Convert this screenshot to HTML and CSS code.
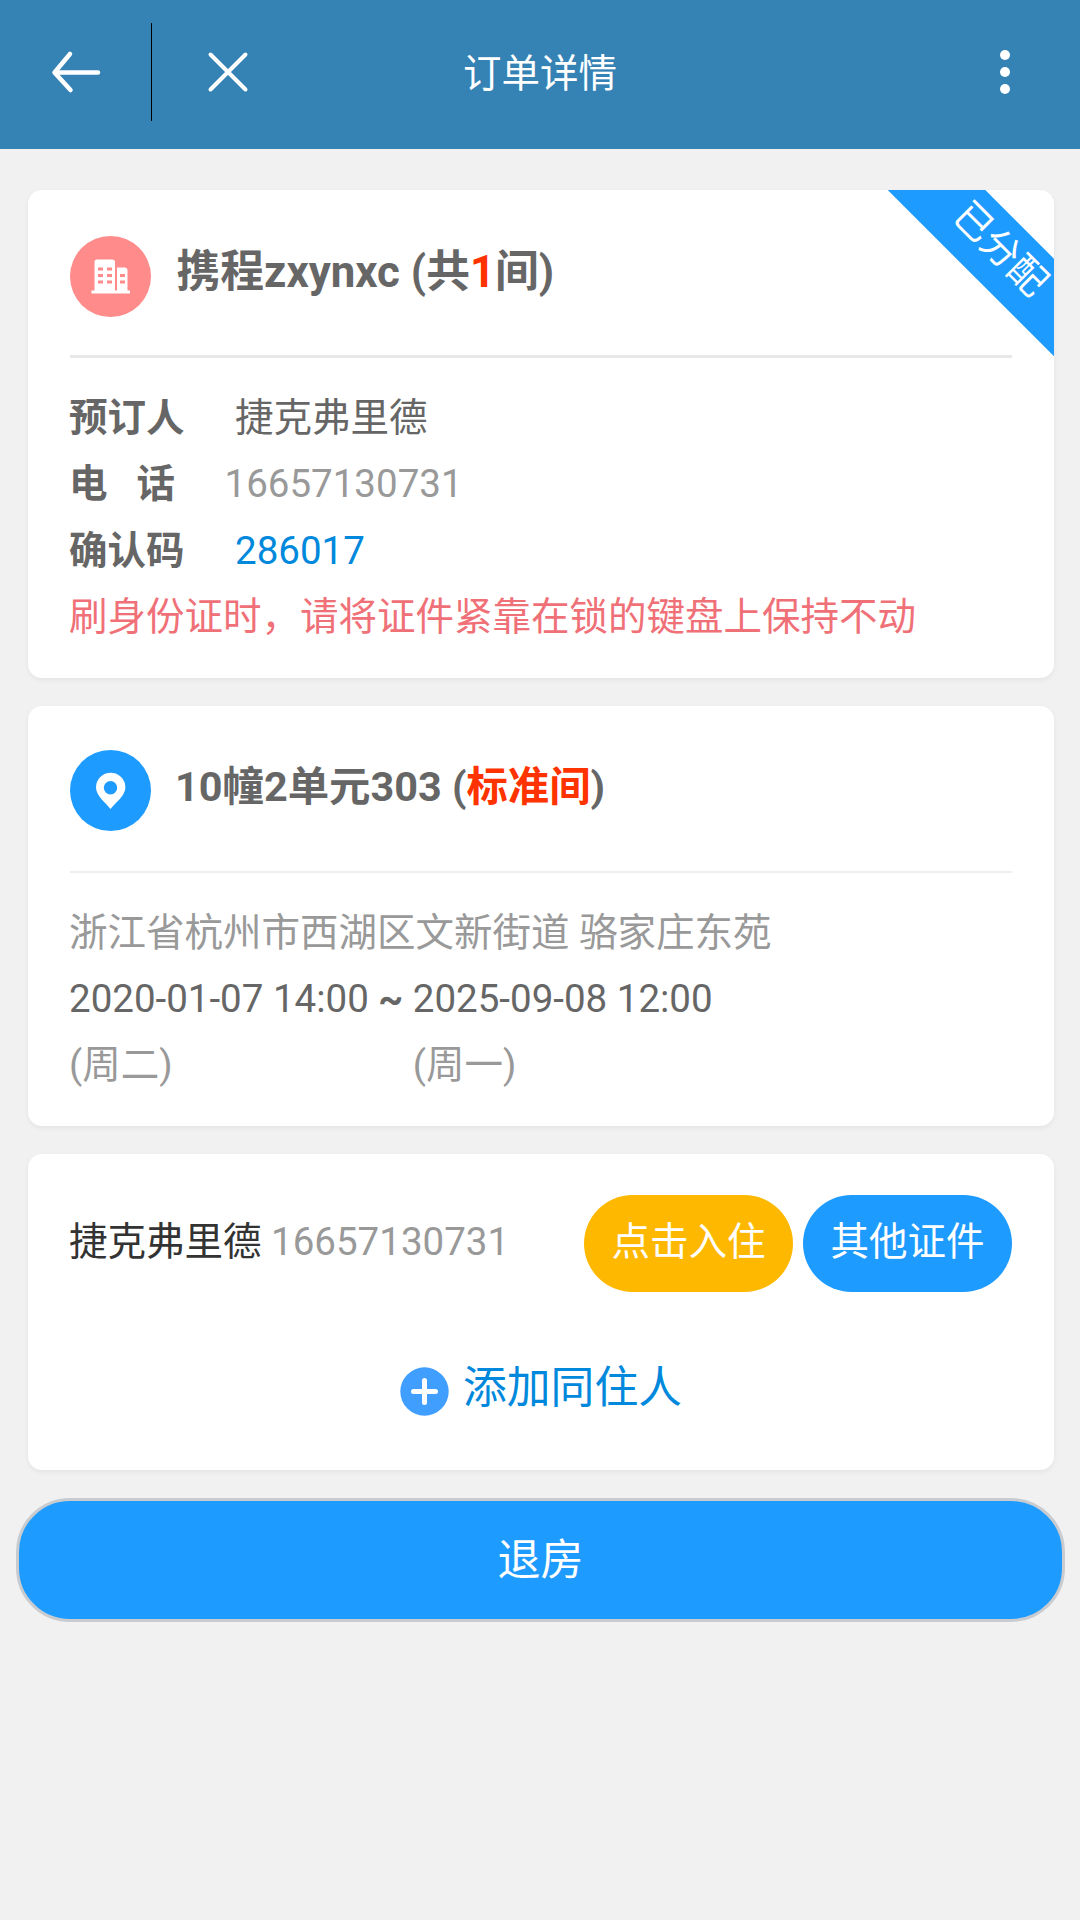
FILE: index.html
```html
<!DOCTYPE html>
<html lang="zh-CN">
<head>
<meta charset="utf-8">
<title>订单详情</title>
<link rel="stylesheet" href="styles.css">
</head>
<body>
<header class="topbar">
  <div class="topbar-side">
    <svg class="icon-back" width="52" height="44" viewBox="0 0 52 44"><path d="M20 4 4.500 22.500 20.500 40M5 22.500H48"/></svg>
    <span class="topbar-line"></span>
    <svg class="icon-close" width="42" height="42" viewBox="0 0 42 42"><path d="M3.500 3.500 38.500 38.500M38.500 3.500 3.500 38.500"/></svg>
  </div>
  <h1 class="topbar-title">订单详情</h1>
  <div class="topbar-side topbar-end">
    <svg class="icon-more" width="10" height="44" viewBox="0 0 10 44"><circle cx="5" cy="5" r="5"/><circle cx="5" cy="22" r="5"/><circle cx="5" cy="39" r="5"/></svg>
  </div>
</header>
<main class="content">
  <section class="card card-order">
    <div class="ribbon">已分配</div>
    <div class="card-head">
      <svg class="badge" width="81" height="81" viewBox="0 0 81 81">
        <circle cx="40.500" cy="40.500" r="40.500" fill="#ff8b8b"/>
        <path fill="#fff" fill-rule="evenodd" d="M21.500 54.500H24.500V26Q24.500 23.500 27 23.500H42.500Q45 23.500 45 26V54.500H47V31.500H54.500Q57.500 31.500 57.500 34.500V54.500H60V57.500H21.500ZM28 31.500V34.500H33V31.500ZM37 31.500V34.500H42V31.500ZM28 38V41H33V38ZM37 38V41H42V38ZM28 44.500V47.500H33V44.500ZM37 44.500V47.500H42V44.500ZM50 38V41H55V38ZM50 44.500V47.500H55V44.500Z"/>
      </svg>
      <h2 class="card-title">携程zxynxc (共<em>1</em>间)</h2>
    </div>
    <div class="rows">
      <div class="row"><b class="label">预订人</b><span>捷克弗里德</span></div>
      <div class="row"><b class="label label-phone"><i>电</i><i>话</i></b><span class="muted">16657130731</span></div>
      <div class="row"><b class="label">确认码</b><span class="link">286017</span></div>
      <div class="row warn">刷身份证时，请将证件紧靠在锁的键盘上保持不动</div>
    </div>
  </section>

  <section class="card card-room">
    <div class="card-head">
      <svg class="badge" width="81" height="81" viewBox="0 0 81 81">
        <circle cx="40.500" cy="40.500" r="40.500" fill="#1e9bff"/>
        <path fill="#fff" fill-rule="evenodd" d="M40.500 59C36 53 26 46 26 37.500a14.700 14.700 0 0 1 29.400 0C55.400 46 45 53 40.500 59ZM40.500 31a6.700 6.700 0 1 0 0 13.400a6.700 6.700 0 0 0 0-13.400Z"/>
      </svg>
      <h2 class="card-title">10幢2单元303 (<em>标准间</em>)</h2>
    </div>
    <div class="rows">
      <div class="row muted">浙江省杭州市西湖区文新街道 骆家庄东苑</div>
      <div class="stay">
        <span>2020-01-07 14:00</span><b>~</b><span>2025-09-08 12:00</span>
        <span class="muted">(周二)</span><b></b><span class="muted">(周一)</span>
      </div>
    </div>
  </section>

  <section class="card card-guests">
    <div class="guest">
      <div class="guest-info">捷克弗里德 <span class="muted">16657130731</span></div>
      <div class="guest-actions">
        <button class="pill pill-checkin">点击入住</button>
        <button class="pill pill-other">其他证件</button>
      </div>
    </div>
    <div class="add">
      <svg class="icon-add" width="49" height="49" viewBox="0 0 49 49"><circle cx="24.500" cy="24.500" r="24.200" fill="#409eff"/><path d="M13.500 24.500H35.500M24.500 13.500V35.500" stroke="#fff" stroke-width="5" stroke-linecap="round"/></svg>
      <span class="add-text">添加同住人</span>
    </div>
  </section>

  <button class="checkout">退房</button>
</main>
</body>
</html>
```
FILE: styles.css
```css
* { box-sizing: border-box; }
body {
  margin: 0;
  min-height: 1920px;
  background: #f1f1f1;
  color: #666;
  font: 38.5px/66px Roboto, "Noto Sans CJK SC", sans-serif;
}
button { font: inherit; border: 0; padding: 0; color: #fff; }
em, i { font-style: normal; }
svg { display: block; flex: none; }

.topbar {
  display: grid;
  grid-template-columns: 1fr auto 1fr;
  align-items: center;
  height: 149px;
  padding: 0 70px 5px 50px;
  background: #3582b5;
  color: #fff;
}
.topbar-side { display: flex; align-items: center; }
.topbar-end { justify-content: flex-end; }
.topbar-title { margin: 0 0 0 20px; padding-top: 3px; font-size: 38.5px; font-weight: 400; }
.icon-back, .icon-close { fill: none; stroke: #fff; stroke-width: 4.5; stroke-linecap: round; stroke-linejoin: round; }
.icon-close { stroke-width: 4; }
.icon-more { fill: #fff; }
.topbar-line { width: 1px; height: 98px; margin: 0 55px 0 49px; background: #000; }

.content { display: flex; flex-direction: column; gap: 28px; padding: 41px 15px 0 16px; }
.card {
  position: relative;
  overflow: hidden;
  margin: 0 11px 0 12px;
  padding: 0 42px;
  border-radius: 14px;
  background: #fff;
  box-shadow: 0 2px 5px rgba(0, 0, 0, .06);
}
.card-order { height: 488px; }
.card-room { height: 420px; }
.card-guests { height: 316px; padding-top: 41px; }

.card-head { display: flex; gap: 25.5px; }
.card-order .card-head { height: 168px; padding-top: 46px; border-bottom: 3px solid #e8e8e8; }
.card-room .card-head { height: 167px; padding-top: 44px; border-bottom: 2px solid #eee; }
.card-title { margin: 3px 0 0; font-size: 43.8px; font-weight: 700; white-space: pre; }
.card-room .card-head { gap: 24px; }
.card-room .card-title { margin-top: 4px; font-size: 41.400px; }
.card-title em { color: #f30; }

.rows { margin-left: -1px; padding-top: 27px; white-space: nowrap; }
.row { display: flex; height: 66.3px; }
.label { margin-right: 50.5px; }
.label-phone { display: flex; gap: 29px; margin-right: 49.5px; }
.muted { color: #999; }
.link { color: #0089dc; }
.warn { color: #f07078; }
.stay { display: grid; grid-template-columns: auto 44px auto; justify-content: start; grid-auto-rows: 66px; }
.stay b { text-align: center; }

.ribbon {
  position: absolute;
  top: 28px;
  right: -75px;
  width: 260px;
  height: 69px;
  padding-right: 3px;
  font-size: 38px;
  line-height: 62px;
  text-align: center;
  color: #fff;
  background: #1e9bff;
  transform: rotate(45deg);
}

.guest { display: flex; justify-content: space-between; height: 97px; }
.guest-info { margin-left: -1px; padding-top: 14px; color: #333; }
.guest-info .muted { color: #999; }
.guest-actions { display: flex; gap: 10px; }
.pill { width: 209px; height: 97px; padding-bottom: 3px; border-radius: 49px; }
.pill-checkin { background: #ffb800; }
.pill-other { background: #1e9bff; }

.add { display: flex; justify-content: center; gap: 14px; margin-top: 75px; }
.add-text { margin-top: -12px; font-size: 43.800px; color: #0089dc; }

.checkout {
  height: 124px;
  padding-bottom: 1px;
  border: 3px solid #c8ccd0;
  border-radius: 54px;
  background: #1e9bff;
  font-size: 43px;
}
```
